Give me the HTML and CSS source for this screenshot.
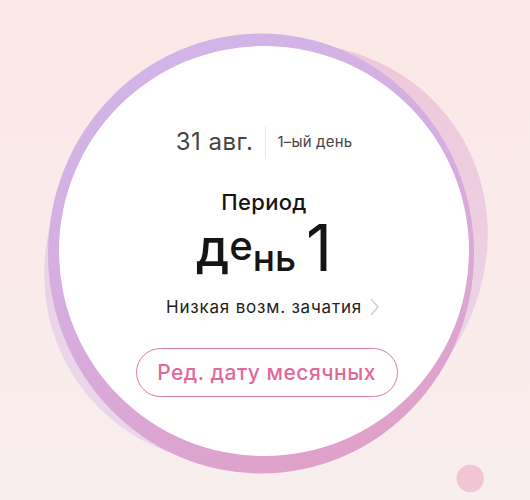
FILE: index.html
```html
<!DOCTYPE html>
<html lang="ru">
<head>
<meta charset="utf-8">
<link rel="stylesheet" href="styles.css">
</head>
<body>
<div class="stage">
  <svg class="rings" viewBox="0 0 530 500" width="530" height="500" aria-hidden="true">
    <defs>
      <linearGradient id="back" x1="0" y1="1" x2="1" y2="0">
        <stop offset="0" stop-color="#e8d9ef"/>
        <stop offset="0.45" stop-color="#ecd2e5"/>
        <stop offset="1" stop-color="#f0c5d7"/>
      </linearGradient>
      <linearGradient id="main" x1="0.3" y1="0" x2="0.7" y2="1">
        <stop offset="0" stop-color="#d2b5e7"/>
        <stop offset="0.45" stop-color="#d6ade0"/>
        <stop offset="1" stop-color="#e0a0c8"/>
      </linearGradient>
    </defs>
    <ellipse cx="266" cy="254" rx="228" ry="205" transform="rotate(-32 266 254)" fill="url(#back)"/>
    <ellipse cx="261" cy="253.5" rx="213" ry="220" fill="url(#main)"/>
    <circle cx="264" cy="251" r="205" fill="#ffffff"/>
    <circle cx="470.3" cy="478.5" r="13.7" fill="#f1c5d3"/>
  </svg>

  <div class="content">
    <div class="date-row">
      <span class="date">31 авг.</span>
      <span class="sep"></span>
      <span class="day-num">1–ый день</span>
    </div>
    <div class="phase">Период</div>
    <div class="big-day"><span class="g-d">д</span><span class="g-e">е</span><span class="g-n">нь </span><span class="g-1">1</span></div>
    <div class="chance">
      <span>Низкая возм. зачатия</span>
      <svg class="chev" width="9" height="18" viewBox="0 0 9 18"><polyline points="1,1 8,9 1,17" fill="none" stroke="#cdcdcd" stroke-width="1.3"/></svg>
    </div>
    <div class="edit-btn">Ред. дату месячных</div>
  </div>
</div>
</body>
</html>
```

FILE: styles.css
```css
html, body {
  margin: 0;
  padding: 0;
}
body {
  width: 530px;
  height: 500px;
  overflow: hidden;
  font-family: "Inter", "Liberation Sans", sans-serif;
}
.stage {
  position: relative;
  width: 530px;
  height: 500px;
  background: linear-gradient(180deg, #fbe8e7 0%, #f9ebea 60%, #f8eeee 100%);
}
.rings {
  position: absolute;
  left: 0;
  top: 0;
}
.content {
  position: relative;
  display: flex;
  flex-direction: column;
  align-items: center;
  padding-top: 127px;
  padding-right: 2px;
}
.date-row {
  display: flex;
  align-items: center;
  height: 30px;
}
.date {
  font-size: 24px;
  line-height: 30px;
  color: #454545;
  letter-spacing: 0.5px;
}
.sep {
  width: 1px;
  height: 33px;
  background: #e8e8e8;
  margin: 0 11px 0 12px;
}
.day-num {
  font-size: 15px;
  line-height: 30px;
  color: #454545;
  letter-spacing: 0.2px;
}
.phase {
  margin-top: 31px;
  font-size: 22px;
  line-height: 28px;
  font-weight: 500;
  color: #151515;
  letter-spacing: 0.3px;
}
.big-day {
  height: 64px;
  font-size: 64px;
  line-height: 64px;
  color: #151515;
  white-space: nowrap;
  font-weight: 500;
}
.g-d {
  font-size: 52px;
  line-height: 1;
  vertical-align: 5px;
}
.g-e {
  font-size: 40px;
  line-height: 1;
  vertical-align: 11px;
}
.g-n {
  font-size: 37px;
  line-height: 1;
}
.g-1 {
  font-weight: 400;
}
.chance {
  margin-top: 16px;
  display: flex;
  align-items: center;
  gap: 8px;
  padding-left: 17px;
  font-size: 17px;
  line-height: 22px;
  color: #222222;
  letter-spacing: 0.8px;
}
.chev {
  display: block;
}
.edit-btn {
  margin-top: 30px;
  width: 260px;
  height: 47px;
  border: 1.5px solid #db7aa3;
  border-radius: 26px;
  display: flex;
  align-items: center;
  justify-content: center;
  font-size: 21px;
  font-weight: 500;
  color: #e0699c;
  letter-spacing: 0.5px;
  margin-left: 5px;
}
```
